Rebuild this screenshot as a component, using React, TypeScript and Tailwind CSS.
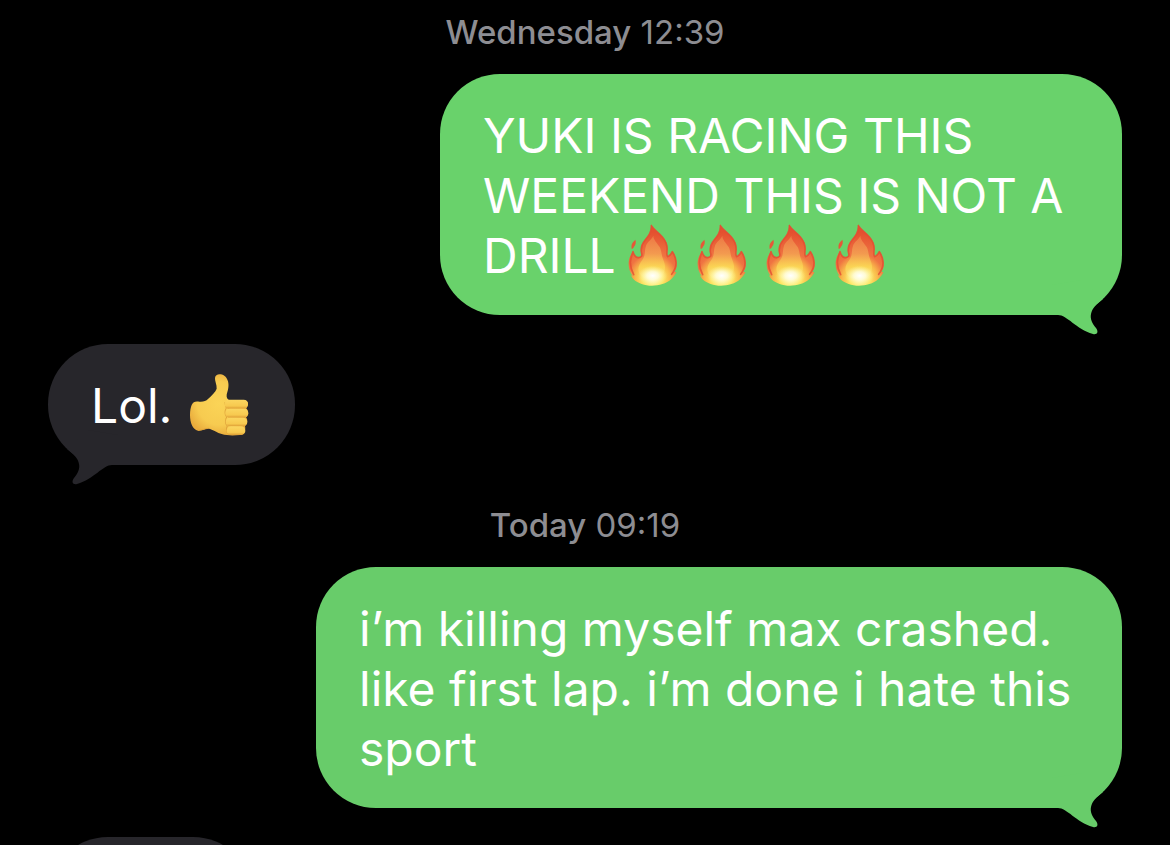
import type { ReactNode } from 'react'
import clsx from 'clsx'

interface Message {
  id: number
  from: 'me' | 'them'
  text: string
  emoji?: 'fire' | 'thumb'
  count?: number
  width: string
  color: string
  tail: string
}

interface Section {
  day: string
  time: string
  messages: Message[]
}

const sections: Section[] = [
  {
    day: 'Wednesday',
    time: '12:39',
    messages: [
      {
        id: 1,
        from: 'me',
        text: 'YUKI IS RACING THIS WEEKEND THIS IS NOT A DRILL',
        emoji: 'fire',
        count: 4,
        width: 'max-w-[682px]',
        color: 'bg-[#69d26b]',
        tail: 'text-[#69d26b]',
      },
      {
        id: 2,
        from: 'them',
        text: 'Lol. ',
        emoji: 'thumb',
        count: 1,
        width: 'max-w-[682px]',
        color: 'bg-[#27262b]',
        tail: 'text-[#27262b]',
      },
    ],
  },
  {
    day: 'Today',
    time: '09:19',
    messages: [
      {
        id: 3,
        from: 'me',
        text: 'i’m killing myself max crashed. like first lap. i’m done i hate this sport',
        width: 'max-w-[806px]',
        color: 'bg-[#68cc6a]',
        tail: 'text-[#68cc6a]',
      },
    ],
  },
]

function Gradients() {
  return (
    <svg className="absolute size-0" aria-hidden="true">
      <defs>
        <radialGradient id="flame" gradientUnits="userSpaceOnUse" cx="104" cy="168" r="140">
          <stop offset="0" stopColor="#fffbb0" />
          <stop offset="0.22" stopColor="#fde766" />
          <stop offset="0.38" stopColor="#f9b94a" />
          <stop offset="0.54" stopColor="#ef7442" />
          <stop offset="1" stopColor="#e4502f" />
        </radialGradient>
        <linearGradient id="flameCore" x1="0" y1="0" x2="0" y2="1">
          <stop offset="0" stopColor="#ee7d48" />
          <stop offset="0.4" stopColor="#f3a052" />
          <stop offset="0.7" stopColor="#fbd554" />
          <stop offset="1" stopColor="#fff6a0" stopOpacity="0" />
        </linearGradient>
        <radialGradient id="glow">
          <stop offset="0" stopColor="#ffffff" />
          <stop offset="0.4" stopColor="#fffde0" stopOpacity="0.85" />
          <stop offset="1" stopColor="#fff6a0" stopOpacity="0" />
        </radialGradient>
        <radialGradient id="skin" gradientUnits="userSpaceOnUse" cx="90" cy="90" r="100">
          <stop offset="0" stopColor="#fbd457" />
          <stop offset="0.65" stopColor="#f7cb50" />
          <stop offset="1" stopColor="#e9ab3c" />
        </radialGradient>
        <linearGradient id="finger" x1="0" y1="0" x2="0" y2="1">
          <stop offset="0" stopColor="#fbd660" />
          <stop offset="0.7" stopColor="#f7c94f" />
          <stop offset="1" stopColor="#dd9d35" />
        </linearGradient>
      </defs>
    </svg>
  )
}

function Fire() {
  return (
    <svg
      viewBox="0 9 207 192"
      className="inline-block h-16 w-[69px] overflow-visible align-top"
      role="img"
      aria-label="fire"
    >
      <path
        fill="url(#flame)"
        d="M99 4C107 19 122 28 134 41C146 54 150 68 148 83C147 91 147 96 149 99C155 96 160 92 163 83C170 94 176 107 176 121C177 132 174 139 169 147L175 147C173 153 167 162 160 168C145 182 123 188 102 188C80 188 59 180 48 170C43 165 40 161 39 157L44 159C35 147 31 133 32 118C33 103 40 93 45 83C48 96 54 101 60 103C67 103 72 99 70 93C65 76 71 62 80 51C91 38 101 27 99 4Z"
      />
      <path
        fill="none"
        stroke="#e44d32"
        strokeWidth="5"
        strokeOpacity="0.8"
        strokeLinecap="round"
        strokeLinejoin="round"
        d="M47 155C28 118 42 98 45 86C49 99 55 105 62 104C70 103 73 99 71 91C67 76 72 63 81 52C91 40 101 28 100 8C109 22 123 30 133 42C144 55 149 68 147 84C146 94 147 99 149 101C157 98 161 91 163 86C171 98 184 124 161 154"
      />
      <path
        fill="url(#flameCore)"
        opacity="0.85"
        d="M106 38C106 50 116 58 125 72C131 83 130 97 136 111C142 126 145 144 130 161C114 175 82 174 69 158C56 143 61 126 73 111C83 98 79 82 84 68C89 55 100 51 106 38Z"
      />
      <ellipse cx="104" cy="158" rx="44" ry="30" fill="url(#glow)" />
      <path fill="#e65737" d="M52 50C55 57 53 66 48 71C46 75 44 77 41 78C40 69 40 64 45 58Z" />
    </svg>
  )
}

function Thumb() {
  return (
    <svg
      viewBox="-3 8 192 192"
      className="inline-block size-16 overflow-visible align-top"
      role="img"
      aria-label="thumbs up"
    >
      <path
        fill="url(#skin)"
        d="M8 95C12 85 20 83 31 85C43 86 51 83 57 77C68 66 80 56 83 46C84 34 77 23 78 14C79 5 86 2 95 3C106 4 114 13 117 24C121 40 116 53 113 64C112 73 115 78 122 81L164 80C173 80 178 85 177 93C176 99 174 102 171 104C179 110 179 126 171 132C177 138 176 153 168 158C171 170 166 184 153 185C132 187 115 187 98 182C84 179 76 171 63 167C50 164 40 173 27 172C11 169 3 147 3 125C3 112 5 102 8 95Z"
      />
      <path
        fill="none"
        stroke="#dfa23a"
        strokeWidth="3"
        strokeLinecap="round"
        d="M108 88C109 96 110 99 112 104C106 113 108 126 113 131C108 140 108 152 115 158C111 165 112 178 119 183M57 165C45 166 37 172 28 171"
      />
      <rect x="107" y="79" width="70" height="27" rx="13" fill="url(#finger)" />
      <rect x="109" y="106" width="69" height="27" rx="13" fill="url(#finger)" />
      <rect x="110" y="133" width="65" height="26" rx="13" fill="url(#finger)" />
      <rect x="113" y="159" width="56" height="26" rx="13" fill="url(#finger)" />
    </svg>
  )
}

function Tail({ from, color }: { from: Message['from']; color: string }) {
  return (
    <svg
      viewBox="0 0 70 100"
      fill="currentColor"
      className={clsx(
        'absolute -bottom-5 h-[100px] w-[70px]',
        color,
        from === 'me' ? 'right-0' : 'left-0 -scale-x-100',
      )}
      aria-hidden="true"
    >
      <path d="M0 50V80H6C15 80 24 94 41 99C45 100 47 97 44 93C40 88 38 84 39 79C40 73 44 70 51 64L30 45Z" />
    </svg>
  )
}

function Bubble({ message, children }: { message: Message; children: ReactNode }) {
  return (
    <li
      className={clsx(
        'relative rounded-[60px] px-[43px] pt-8 pb-[29px]',
        message.width,
        message.color,
        message.from === 'me' ? 'self-end' : 'self-start',
      )}
    >
      <Tail from={message.from} color={message.tail} />
      <p className="relative text-[48px] leading-[60px] text-white">{children}</p>
    </li>
  )
}

export default function App() {
  return (
    <main className="h-screen overflow-hidden bg-black px-12 pt-3 font-['Inter','Liberation_Sans',sans-serif]">
      <Gradients />
      {sections.map((section) => (
        <section key={section.day} className="mb-10">
          <h2 className="text-center text-[33px] leading-10 font-normal text-[#8d8d92]">
            <span className="font-medium">{section.day}</span> {section.time}
          </h2>
          <ul className="mt-[22px] flex flex-col gap-[29px]">
            {section.messages.map((message) => (
              <Bubble key={message.id} message={message}>
                {message.text}
                {message.emoji && (
                  <span className="inline-block h-[60px] pl-0.5 align-top whitespace-nowrap">
                    {[...Array(message.count)].map((_, i) =>
                      message.emoji === 'fire' ? <Fire key={i} /> : <Thumb key={i} />,
                    )}
                  </span>
                )}
              </Bubble>
            ))}
            {/* next incoming message, cut off by the bottom of the screen */}
            {section.day === 'Today' && <li className="h-[121px] w-[205px] rounded-[60px] bg-[#27262b]" />}
          </ul>
        </section>
      ))}
    </main>
  )
}
